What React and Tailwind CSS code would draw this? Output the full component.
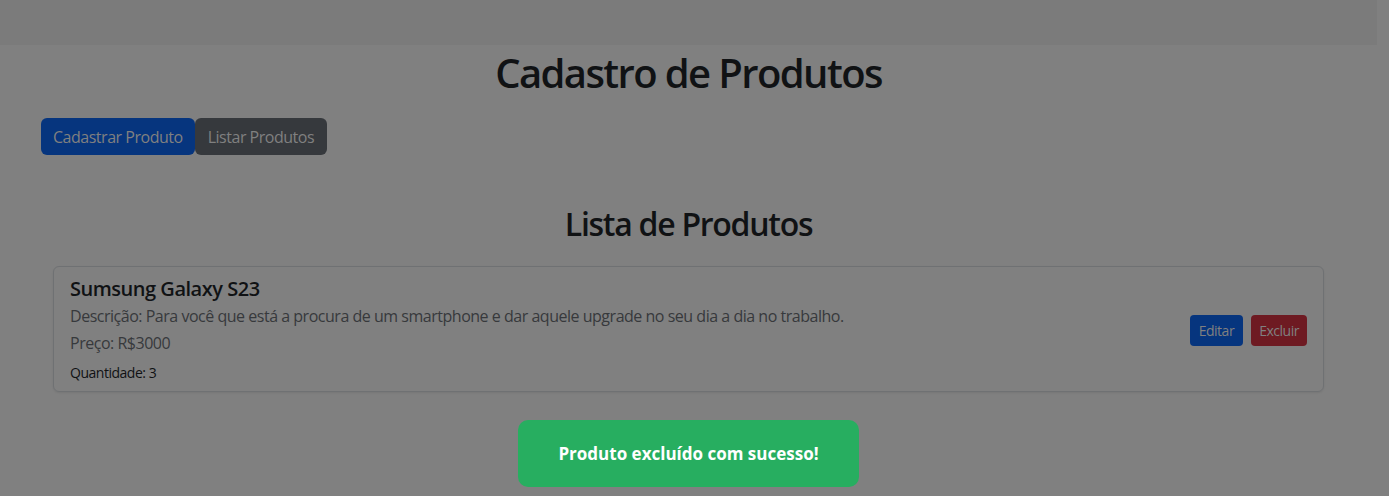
export default function App() {
  const font = { fontFamily: '"Open Sans", "Noto Sans", sans-serif' };
  return (
    <div className="relative w-[1389px] h-[496px] overflow-hidden bg-[#808080] tracking-[-0.03em]" style={font}>
      <div className="w-[1377px]">
        <div className="h-[45px] bg-[#7b7b7b]" />
        <h1 className="mt-[4px] text-center text-[40px] leading-[48px] font-semibold tracking-[-0.04em] text-[#101214]">
          Cadastro de Produtos
        </h1>
        <div className="mt-[21px] flex px-[41px]">
          <button className="h-[37px] px-[12px] rounded-[6px] bg-[#06357e] text-[16px] text-[#808080]">
            Cadastrar Produto
          </button>
          <button className="h-[37px] px-[13px] rounded-[6px] bg-[#36393d] text-[16px] text-[#808080]">
            Listar Produtos
          </button>
        </div>
        <h2 className="mt-[50px] text-center text-[32px] leading-[38px] font-semibold tracking-[-0.04em] text-[#101214]">
          Lista de Produtos
        </h2>
        <div className="mt-[23px] mx-[53px] h-[126px] rounded-[6px] border border-[#6f7173] shadow-[0_1px_2px_rgba(0,0,0,0.08)] flex justify-between pl-[16px] pr-[16px] pt-[10px]">
          <div className="flex flex-col">
            <div className="text-[20px] leading-[24px] font-semibold text-[#101214]">Sumsung Galaxy S23</div>
            <div className="mt-[3px] text-[16px] leading-[24px] text-[#37393c]">
              Descrição: Para você que está a procura de um smartphone e dar aquele upgrade no seu dia a dia no trabalho.
            </div>
            <div className="mt-[3px] text-[16px] leading-[24px] text-[#37393c]">Preço: R$3000</div>
            <div className="mt-[8px] text-[14px] leading-[20px] text-[#101214]">Quantidade: 3</div>
          </div>
          <div className="flex gap-[8px] self-center mb-[8px]">
            <button className="h-[31px] px-[9px] rounded-[4px] bg-[#06357e] text-[14px] text-[#808080]">Editar</button>
            <button className="h-[31px] px-[8px] rounded-[4px] bg-[#6e1a22] text-[14px] text-[#808080]">Excluir</button>
          </div>
        </div>
      </div>
      <div className="absolute left-[518px] top-[420px] w-[341px] h-[67px] rounded-[10px] bg-[#27ae60] flex items-center justify-center text-[17px] font-bold text-white tracking-normal">
        Produto excluído com sucesso!
      </div>
    </div>
  );
}
